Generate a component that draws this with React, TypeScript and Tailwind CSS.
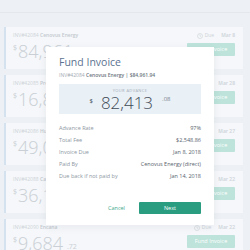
import React from "react";

const invoices = [
  { id: "INV#42084", client: "Cenovus Energy", dollars: "84,961", cents: ".94", due: "Mar 8" },
  { id: "INV#42085", client: "Precision Drilling", dollars: "16,842", cents: ".50", due: "Mar 28" },
  { id: "INV#42086", client: "Husky Energy", dollars: "49,075", cents: ".20", due: "Mar 27" },
  { id: "INV#42088", client: "Canadian Natural", dollars: "36,150", cents: ".00", due: "Mar 22" },
  { id: "INV#42090", client: "Encana", dollars: "9,684", cents: ".72", due: "Mar 22" },
];

const details = [
  { label: "Advance Rate", value: "97%" },
  { label: "Total Fee", value: "$2,548.86" },
  { label: "Invoice Due", value: "Jan 8, 2018" },
  { label: "Paid By", value: "Cenovus Energy (direct)" },
  { label: "Due back if not paid by", value: "Jan 14, 2018" },
];

function Clock() {
  return (
    <svg width="6" height="6" viewBox="0 0 12 12" fill="none" stroke="#cdd3d9" strokeWidth="1.2">
      <circle cx="6" cy="6" r="5" />
      <path d="M6 3v3l2 1" />
    </svg>
  );
}

function InvoiceCard({ id, client, dollars, cents, due }: (typeof invoices)[number]) {
  return (
    <div className="flex h-[42px] justify-between border-l-2 border-[#d3e2ee] bg-[#f5f7fa] pl-[7px] pr-[8px] pt-[5px]">
      <div className="flex flex-col">
        <p className="text-[5px] leading-[7px] text-[#cdd3d8]">
          {id} <span className="font-semibold text-[#c3c9cf]">{client}</span>
        </p>
        <div className="mt-[3px] flex items-start text-[#c9cfd5]">
          <span className="mt-[2px] text-[7px] leading-none">$</span>
          <span className="ml-[1px] text-[18px] font-light leading-none">{dollars}</span>
          <span className="ml-[4px] self-end text-[7px] leading-[10px]">{cents}</span>
        </div>
      </div>
      <div className="flex flex-col items-end">
        <div className="flex items-center gap-[2px] text-[5px] leading-[7px] text-[#cdd3d9]">
          <Clock />
          <span>Due</span>
          <span className="ml-[5px] font-semibold">{due}</span>
        </div>
        <button className="mt-[4px] h-[13px] w-[48px] rounded-[1px] bg-[#bde3da] text-[5.5px] text-white">
          Fund Invoice
        </button>
      </div>
    </div>
  );
}

export default function App() {
  return (
    <div className="relative h-[250px] w-[250px] overflow-hidden bg-[#edf1f5] font-['Open_Sans',sans-serif]">
      <div className="h-[13px] border-b border-[#e3e8ed]" />
      <div className="flex flex-col gap-[6px] pl-[4px] pr-[7px] pt-[14px]">
        {invoices.map((inv) => (
          <InvoiceCard key={inv.id} {...inv} />
        ))}
      </div>

      {/* Modal */}
      <div className="absolute left-[46px] top-[47px] flex h-[178px] w-[168px] flex-col bg-white px-[13px] pt-[10px] shadow-[0_2px_8px_rgba(60,80,100,0.08)]">
        <h2 className="text-[10.5px] leading-none text-[#5b7290]">Fund Invoice</h2>
        <p className="mt-[4px] text-[5px] leading-[6px] text-[#a3aab1]">
          INV#42084 <span className="font-semibold text-[#6b757e]">Cenovus Energy</span>
          <span className="font-semibold text-[#6b757e]"> | $84,961.94</span>
        </p>
        <div className="mt-[6px] flex h-[30px] flex-col items-center bg-[#e9f0f6] pt-[4px]">
          <p className="text-[4px] leading-[5px] tracking-[0.1em] text-[#a6afb8]">YOUR ADVANCE</p>
          <div className="mt-[1px] flex items-start text-[#3f4b57]">
            <span className="mt-[4px] text-[6px] leading-none">$</span>
            <span className="ml-[8px] text-[17px] font-light leading-none">82,413</span>
            <span className="ml-[9px] mt-[2px] text-[6px] leading-none text-[#7a848e]">.08</span>
          </div>
        </div>
        <div className="mt-[9px] flex flex-col">
          {details.map((d) => (
            <div key={d.label} className="flex h-[12px] items-center justify-between text-[5.5px]">
              <span className="text-[#8d979f]">{d.label}</span>
              <span className="text-[#58636d]">{d.value}</span>
            </div>
          ))}
        </div>
        <div className="mt-auto mb-[11px] flex items-center justify-end">
          <button className="mr-[14px] text-[5.5px] text-[#42a88d]">Cancel</button>
          <button className="h-[12px] w-[62px] rounded-[1px] bg-[#2a9c7f] text-[5.5px] text-white">Next</button>
        </div>
      </div>
    </div>
  );
}
